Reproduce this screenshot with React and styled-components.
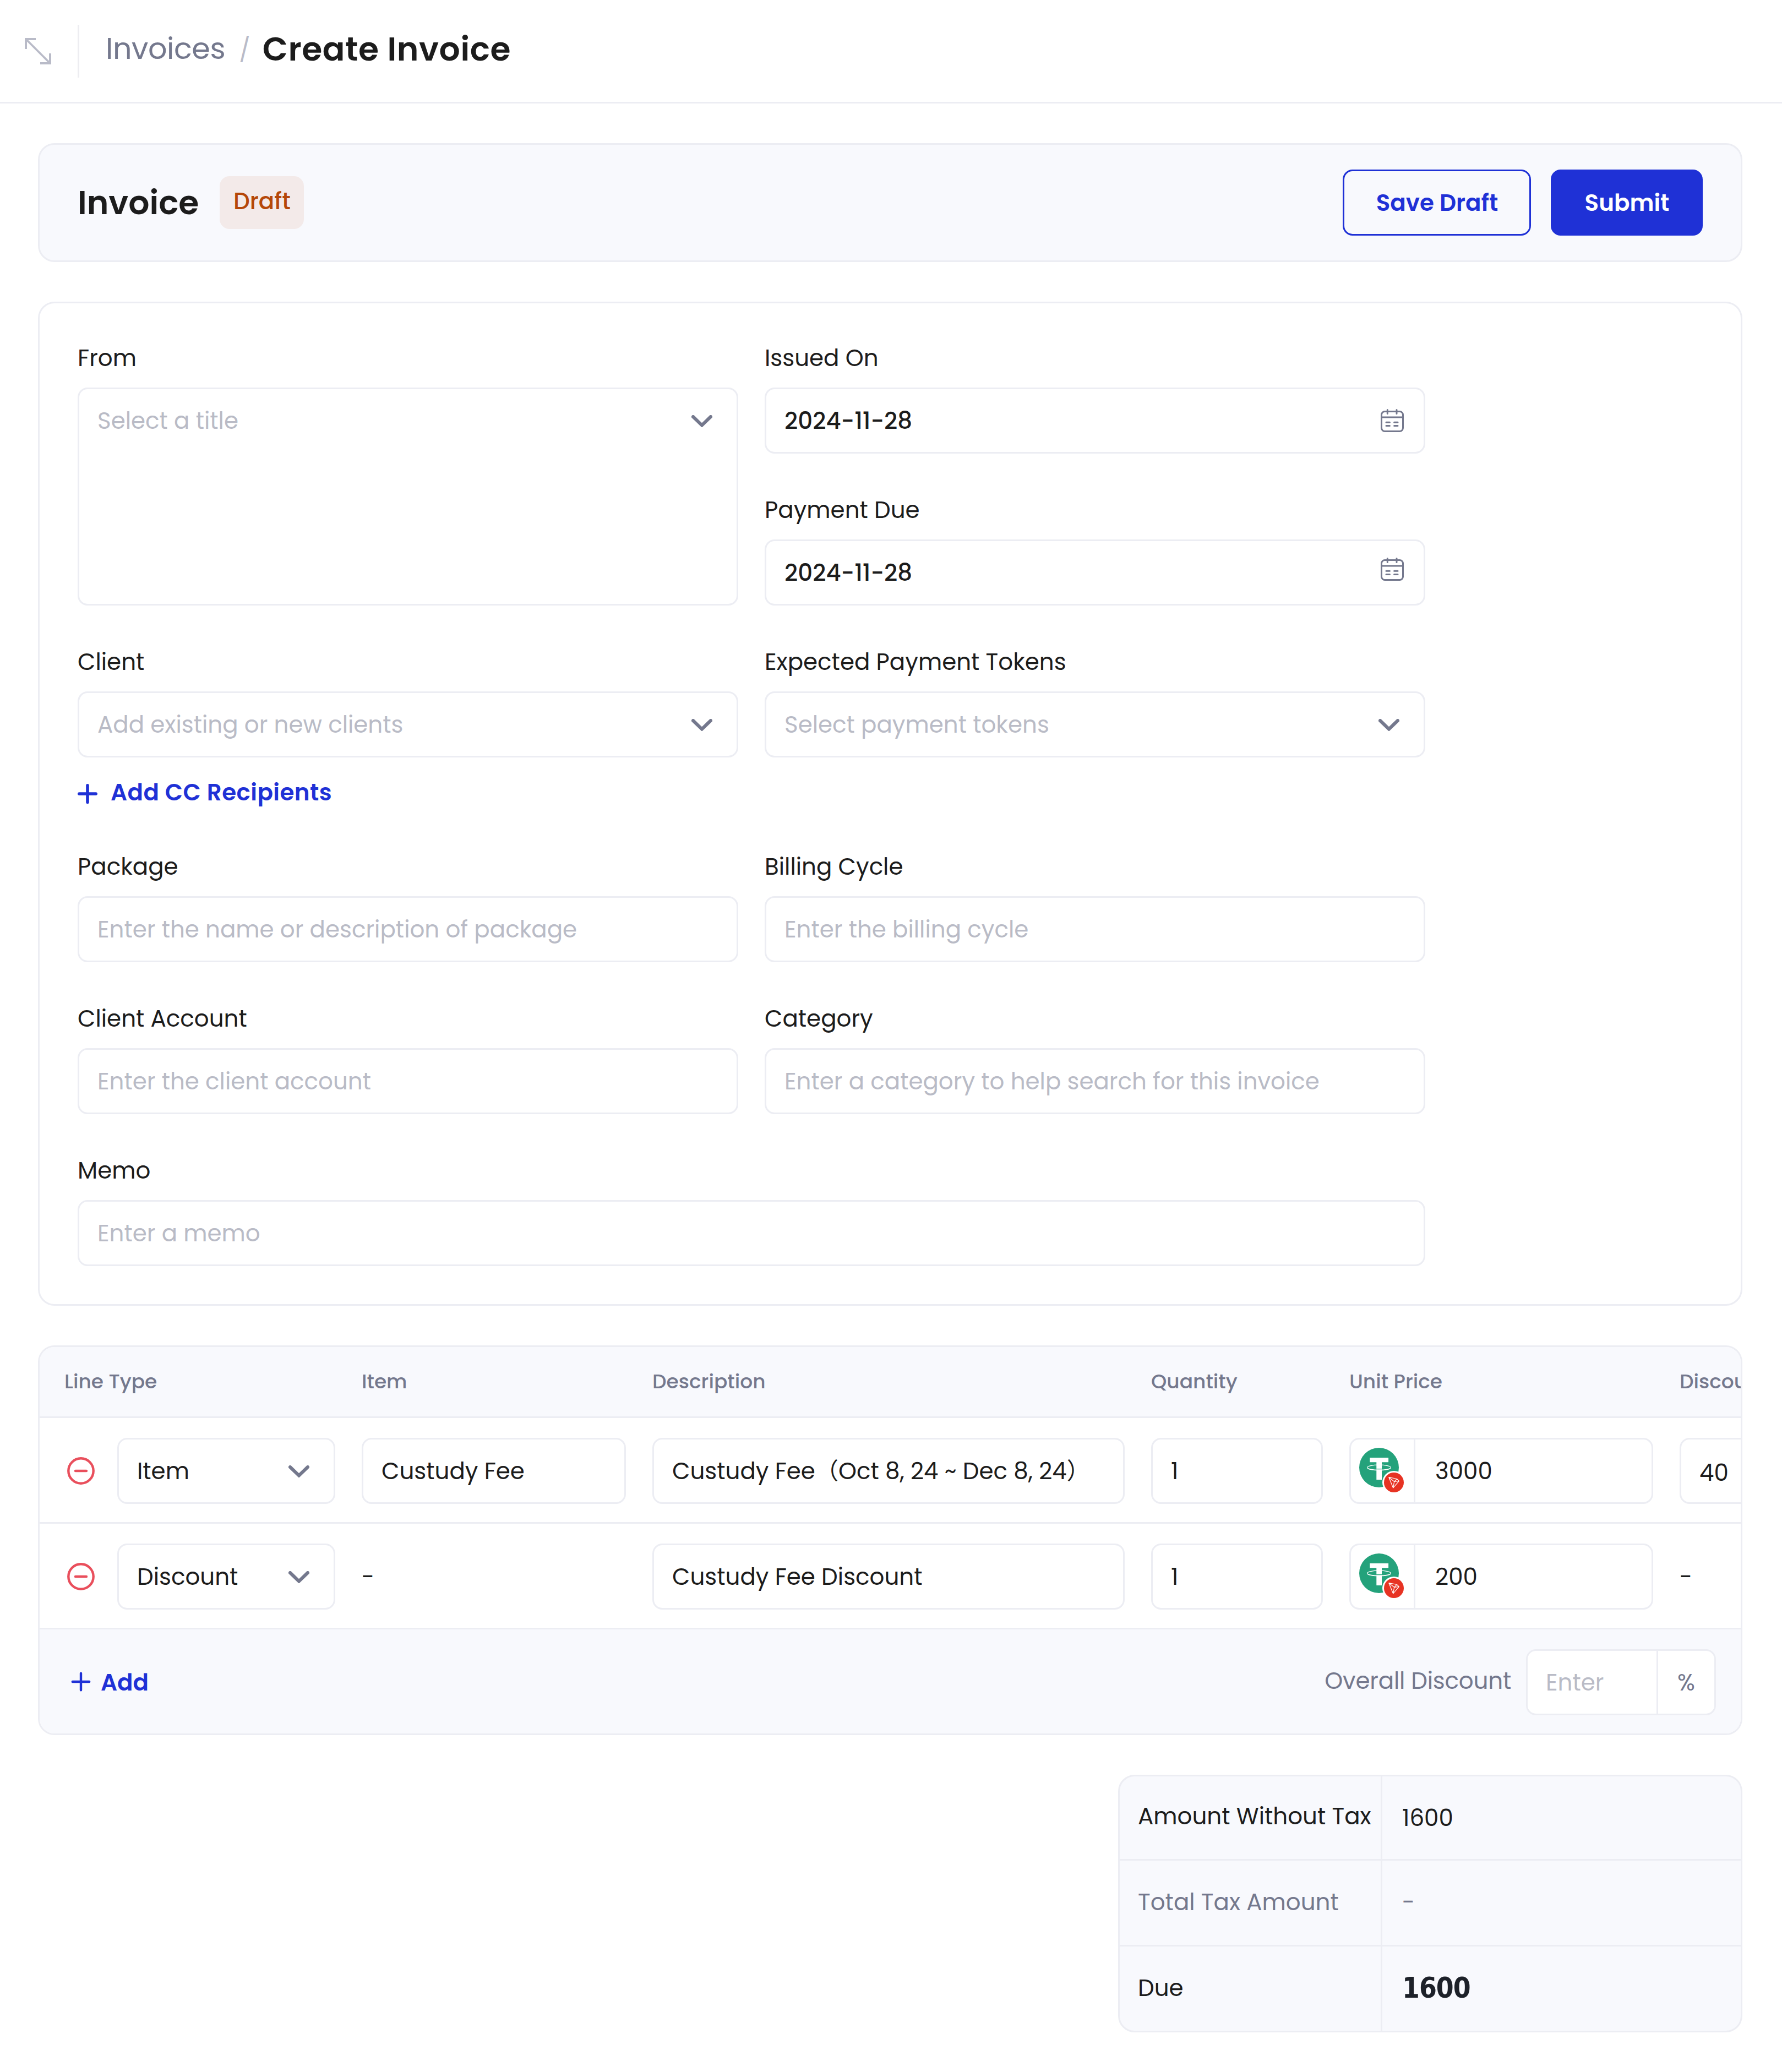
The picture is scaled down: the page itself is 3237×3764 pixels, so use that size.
import { styled, createGlobalStyle } from "styled-components";

const GlobalStyle = createGlobalStyle`
  * {
    box-sizing: border-box;
  }
  body {
    margin: 0;
    background-color: #ffffff;
    color: #1c1c1c;
    font-family: Poppins, Inter, "Noto Sans CJK SC", sans-serif;
    font-size: 42px;
    line-height: 60px;
  }
`;

const Page = styled.div`
  width: 3237px;
  min-height: 3764px;
  overflow: hidden;
`;

const Header = styled.header`
  display: flex;
  align-items: center;
  height: 188px;
  padding-left: 45px;
  border-bottom: 3px solid #ecedf3;
`;
const HeaderDivider = styled.div`
  width: 3px;
  height: 96px;
  margin: 0 48px;
  background-color: #ededf1;
`;
const Breadcrumb = styled.nav`
  display: flex;
  align-items: center;
  padding-bottom: 7px;
`;
const ParentLink = styled.span`
  padding-bottom: 2px;
  color: #74788d;
  font-size: 54px;
  letter-spacing: -0.4px;
`;
const Slash = styled.span`
  margin: 0 22px 0 25px;
  padding-top: 4px;
  color: #b9bbc8;
  font-size: 43px;
`;
const PageTitle = styled.h1`
  margin: 0;
  font-size: 60px;
  font-weight: 600;
  letter-spacing: 0.01em;
`;

const Main = styled.main`
  display: flex;
  flex-direction: column;
  gap: 72px;
  padding: 72px 72px 72px 69px;
`;
const Card = styled.section`
  border: 3px solid #ecedf3;
  border-radius: 30px;
`;

const TitleBar = styled(Card)`
  display: flex;
  align-items: center;
  justify-content: space-between;
  height: 216px;
  padding: 0 69px;
  background-color: #f8f9fd;
`;
const TitleGroup = styled.div`
  display: flex;
  align-items: center;
  gap: 38px;
`;
const CardTitle = styled.h2`
  margin: 0;
  font-size: 60px;
  font-weight: 600;
`;
const StatusChip = styled.span`
  display: flex;
  align-items: center;
  justify-content: center;
  width: 153px;
  height: 96px;
  padding-bottom: 5px;
  border-radius: 18px;
  background-color: #f3eae9;
  color: #b54708;
  font-weight: 500;
`;
const ButtonGroup = styled.div`
  display: flex;
  gap: 36px;
`;
const Button = styled.button`
  width: ${(props) => (props.$primary ? "276px" : "342px")};
  height: 120px;
  padding: 2px 0 0 1px;
  border: 3px solid #1f31d6;
  border-radius: 18px;
  background-color: ${(props) => (props.$primary ? "#1f31d6" : "transparent")};
  color: ${(props) => (props.$primary ? "#ffffff" : "#1f31d6")};
  font: inherit;
  font-weight: 600;
`;

const FormCard = styled(Card)`
  height: 1824px;
  padding: 69px;
`;
const FormGrid = styled.div`
  display: grid;
  grid-template-columns: 1200px 1200px;
  column-gap: 48px;
  row-gap: 72px;
`;
const Field = styled.div`
  display: flex;
  flex-direction: column;
  gap: 24px;
  grid-column: ${(props) => (props.$wide ? "span 2" : "auto")};
  grid-row: ${(props) => (props.$tall ? "span 2" : "auto")};
`;
const Label = styled.label`
  display: block;
  height: 60px;
  padding-top: 1px;
`;
const Control = styled.div`
  display: flex;
  align-items: flex-start;
  justify-content: space-between;
  height: ${(props) => (props.$tall ? "396px" : "120px")};
  padding: 28px 33px 26px;
  border: 3px solid #ecedf3;
  border-radius: 18px;
  background-color: #ffffff;
  white-space: nowrap;
`;
const Placeholder = styled.span`
  color: #b9bbc6;
`;
const DateValue = styled.span`
  font-weight: 500;
`;
const ChevronSvg = styled.svg`
  width: 38px;
  height: 22px;
  margin: 19px 11px 0 0;
`;
const CalendarSvg = styled.svg`
  width: 42px;
  height: 42px;
  margin: ${(props) => (props.$raised ? "2px" : "8px")} 3px 0 0;
`;
const AddRecipients = styled.button`
  display: flex;
  align-items: center;
  gap: 24px;
  height: 60px;
  margin-top: 12px;
  padding: 0;
  border: 0;
  background: none;
  color: #1f31d6;
  font: inherit;
  font-weight: 600;
  letter-spacing: 0.011em;

  span {
    padding-bottom: 4px;
  }
`;

const TableCard = styled(Card)`
  overflow: hidden;
`;
const TableRow = styled.div`
  display: grid;
  grid-template-columns: 492px 480px 858px 312px 552px 300px;
  column-gap: 48px;
  width: 3330px;
  height: 192px;
  padding: 36px 48px 0 45px;
  border-bottom: 3px solid #ecedf3;
`;
const TableHead = styled(TableRow)`
  height: 129px;
  padding-top: 33px;
  background-color: #f8f9fd;
  color: #74788d;
  font-size: 36px;
  font-weight: 500;
`;
const LineType = styled.div`
  display: grid;
  grid-template-columns: 96px 396px;
`;
const MinusSvg = styled.svg`
  width: 50px;
  height: 50px;
  margin: 35px 0 0 5px;
`;
const EmptyCell = styled.span`
  padding-top: 31px;
`;
const PriceControl = styled.div`
  display: flex;
  width: ${(props) => props.$width};
  height: 120px;
  border: 3px solid #ecedf3;
  border-radius: 18px;
  background-color: #ffffff;
`;
const TokenCell = styled.div`
  width: 117px;
  padding: 15px 0 0 15px;
  border-right: 3px solid #ecedf3;
`;
const PriceValue = styled.span`
  flex: 1;
  padding: 28px 36px 26px;
`;
const DiscountValue = styled.span`
  padding-top: 3px;
`;
const TableFooter = styled.footer`
  display: flex;
  align-items: flex-start;
  justify-content: space-between;
  height: 189px;
  padding: 36px 45px 0 57px;
  background-color: #f8f9fd;
`;
const AddLine = styled.button`
  display: flex;
  align-items: center;
  gap: 18px;
  height: 118px;
  padding: 0;
  border: 0;
  background: none;
  color: #1f31d6;
  font: inherit;
  font-weight: 600;

  span {
    padding-top: 3px;
  }
`;
const OverallDiscount = styled.div`
  display: flex;
  gap: 27px;
  color: #74788d;
`;
const OverallLabel = styled.span`
  padding-top: 28px;
  letter-spacing: -0.2px;
`;
const EnterCell = styled.div`
  width: 237px;
  padding: 28px 33px 26px;
  border-right: 3px solid #ecedf3;
  color: #b9bbc6;
`;
const PercentCell = styled.div`
  flex: 1;
  padding: 28px 0 26px;
  text-align: center;
`;

const Totals = styled(Card)`
  align-self: flex-end;
  width: 1134px;
  height: 468px;
  overflow: hidden;
  background-color: #f8f9fd;
`;
const TotalRow = styled.div`
  display: flex;
  height: ${(props) => (props.$first ? "153px" : "156px")};
  border-bottom: ${(props) => (props.$last ? "0" : "3px solid #ecedf3")};
  color: ${(props) => (props.$muted ? "#74788d" : "#1c1c1c")};
`;
const TotalLabel = styled.div`
  width: 477px;
  padding: ${(props) => (props.$first ? "43px" : "46px")} 0 0 33px;
  border-right: 3px solid #ecedf3;
  white-space: nowrap;
`;
const TotalValue = styled.div`
  padding: 46px 36px 0;
`;
const DueValue = styled(TotalValue)`
  color: #1d2129;
  font-family: "DejaVu Sans Condensed", "DejaVu Sans", sans-serif;
  font-size: 51px;
  font-weight: 700;
  letter-spacing: -1px;
`;

const Chevron = () => (
  <ChevronSvg viewBox="0 0 38 22" fill="none">
    <path d="M3 3l16 15.5L35 3" stroke="#74788d" strokeWidth="6" strokeLinecap="round" />
  </ChevronSvg>
);

const Calendar = ({ raised }) => (
  <CalendarSvg $raised={raised} viewBox="0 0 42 42" fill="none" stroke="#74788d" strokeWidth="3">
    <rect x="1.5" y="4.5" width="39" height="36" rx="6" />
    <path d="M1.5 15h39" />
    <path d="M12.3 1.5v7M29 1.5v7M10 24.2h6.4M24.6 24.2H31M10 30.6h6.4M24.6 30.6H31" strokeLinecap="round" />
  </CalendarSvg>
);

const Plus = ({ weight }) => (
  <svg width="36" height="36" viewBox="0 0 36 36" fill="none">
    <path
      d="M18 2.8v30.4M2.8 18h30.4"
      stroke="#1f31d6"
      strokeWidth={weight}
      strokeLinecap="round"
    />
  </svg>
);

const Minus = () => (
  <MinusSvg viewBox="0 0 50 50" fill="none" stroke="#e94f5c" strokeWidth="4.4">
    <circle cx="25" cy="25" r="22.7" />
    <path d="M15 25h20" strokeLinecap="round" />
  </MinusSvg>
);

const Expand = () => (
  <svg width="48" height="48" viewBox="0 0 48 48" fill="none" stroke="#b9bbc8" strokeWidth="4">
    <path d="M20 2H2v18M28 46h18V28" />
    <path d="M2 2l44 44" strokeWidth="3.8" />
  </svg>
);

// USDT coin with the TRON network badge
const TokenIcon = () => (
  <svg width="84" height="84" viewBox="0 0 84 84" fill="none">
    <circle cx="36" cy="36" r="36" fill="#24a27b" />
    <ellipse cx="36" cy="35.8" rx="21.4" ry="4.6" stroke="#ffffff" strokeWidth="1.2" />
    <path d="M15 37.4c3 2 11 3.3 21 3.3s18-1.3 21-3.3" stroke="#ffffff" strokeWidth="1.2" />
    <path d="M19.3 18h33.8v8.3H41v12H31.3v-12h-12z" fill="#ffffff" />
    <path d="M31.3 38.5H41" stroke="#24a27b" strokeWidth="1" />
    <path d="M31.3 39.4H41V58h-9.7z" fill="#ffffff" />
    <circle cx="63" cy="63" r="21" fill="#ffffff" />
    <circle cx="63" cy="63" r="18" fill="#e73323" />
    <path
      d="M53.9 53.7l14.5 2.8 4 3.9-10.8 12.4zM53.9 53.7l9.8 7.8 4.7-5M63.7 61.5l8.7-1.1M63.7 61.5l-2.1 11.3"
      stroke="#ffffff"
      strokeWidth="1.2"
      strokeLinejoin="round"
    />
  </svg>
);

const InputField = ({ label, placeholder, wide }) => (
  <Field $wide={wide}>
    <Label>{label}</Label>
    <Control>
      <Placeholder>{placeholder}</Placeholder>
    </Control>
  </Field>
);

const SelectField = ({ label, placeholder, tall, children }) => (
  <Field $tall={tall}>
    <Label>{label}</Label>
    <Control $tall={tall}>
      <Placeholder>{placeholder}</Placeholder>
      <Chevron />
    </Control>
    {children}
  </Field>
);

const DateField = ({ label, value, raised }) => (
  <Field>
    <Label>{label}</Label>
    <Control>
      <DateValue>{value}</DateValue>
      <Calendar raised={raised} />
    </Control>
  </Field>
);

const columns = ["Line Type", "Item", "Description", "Quantity", "Unit Price", "Discount"];

const lines = [
  {
    type: "Item",
    item: "Custudy Fee",
    description: "Custudy Fee（Oct 8, 24 ~ Dec 8, 24）",
    quantity: "1",
    price: "3000",
    discount: "40",
  },
  {
    type: "Discount",
    description: "Custudy Fee Discount",
    quantity: "1",
    price: "200",
  },
];

const LineRow = ({ line }) => (
  <TableRow>
    <LineType>
      <Minus />
      <Control>
        {line.type}
        <Chevron />
      </Control>
    </LineType>
    {line.item ? <Control>{line.item}</Control> : <EmptyCell>-</EmptyCell>}
    <Control>{line.description}</Control>
    <Control>{line.quantity}</Control>
    <PriceControl $width="552px">
      <TokenCell>
        <TokenIcon />
      </TokenCell>
      <PriceValue>{line.price}</PriceValue>
    </PriceControl>
    {line.discount ? (
      <Control>
        <DiscountValue>{line.discount}</DiscountValue>
      </Control>
    ) : (
      <EmptyCell>-</EmptyCell>
    )}
  </TableRow>
);

export default function App() {
  return (
    <Page>
      <GlobalStyle />
      <Header>
        <Expand />
        <HeaderDivider />
        <Breadcrumb>
          <ParentLink>Invoices</ParentLink>
          <Slash>/</Slash>
          <PageTitle>Create Invoice</PageTitle>
        </Breadcrumb>
      </Header>
      <Main>
        <TitleBar>
          <TitleGroup>
            <CardTitle>Invoice</CardTitle>
            <StatusChip>Draft</StatusChip>
          </TitleGroup>
          <ButtonGroup>
            <Button>Save Draft</Button>
            <Button $primary>Submit</Button>
          </ButtonGroup>
        </TitleBar>

        <FormCard>
          <FormGrid>
            <SelectField label="From" placeholder="Select a title" tall />
            <DateField label="Issued On" value="2024-11-28" />
            <DateField label="Payment Due" value="2024-11-28" raised />
            <SelectField label="Client" placeholder="Add existing or new clients">
              <AddRecipients>
                <Plus weight={5.6} />
                <span>Add CC Recipients</span>
              </AddRecipients>
            </SelectField>
            <SelectField label="Expected Payment Tokens" placeholder="Select payment tokens" />
            <InputField label="Package" placeholder="Enter the name or description of package" />
            <InputField label="Billing Cycle" placeholder="Enter the billing cycle" />
            <InputField label="Client Account" placeholder="Enter the client account" />
            <InputField
              label="Category"
              placeholder="Enter a category to help search for this invoice"
            />
            <InputField label="Memo" placeholder="Enter a memo" wide />
          </FormGrid>
        </FormCard>

        <TableCard>
          <TableHead>
            {columns.map((column) => (
              <span key={column}>{column}</span>
            ))}
          </TableHead>
          {lines.map((line) => (
            <LineRow key={line.type} line={line} />
          ))}
          <TableFooter>
            <AddLine>
              <Plus weight={4.4} />
              <span>Add</span>
            </AddLine>
            <OverallDiscount>
              <OverallLabel>Overall Discount</OverallLabel>
              <PriceControl $width="345px">
                <EnterCell>Enter</EnterCell>
                <PercentCell>%</PercentCell>
              </PriceControl>
            </OverallDiscount>
          </TableFooter>
        </TableCard>

        <Totals>
          <TotalRow $first>
            <TotalLabel $first>Amount Without Tax</TotalLabel>
            <TotalValue>1600</TotalValue>
          </TotalRow>
          <TotalRow $muted>
            <TotalLabel>Total Tax Amount</TotalLabel>
            <TotalValue>-</TotalValue>
          </TotalRow>
          <TotalRow $last>
            <TotalLabel>Due</TotalLabel>
            <DueValue>1600</DueValue>
          </TotalRow>
        </Totals>
      </Main>
    </Page>
  );
}
